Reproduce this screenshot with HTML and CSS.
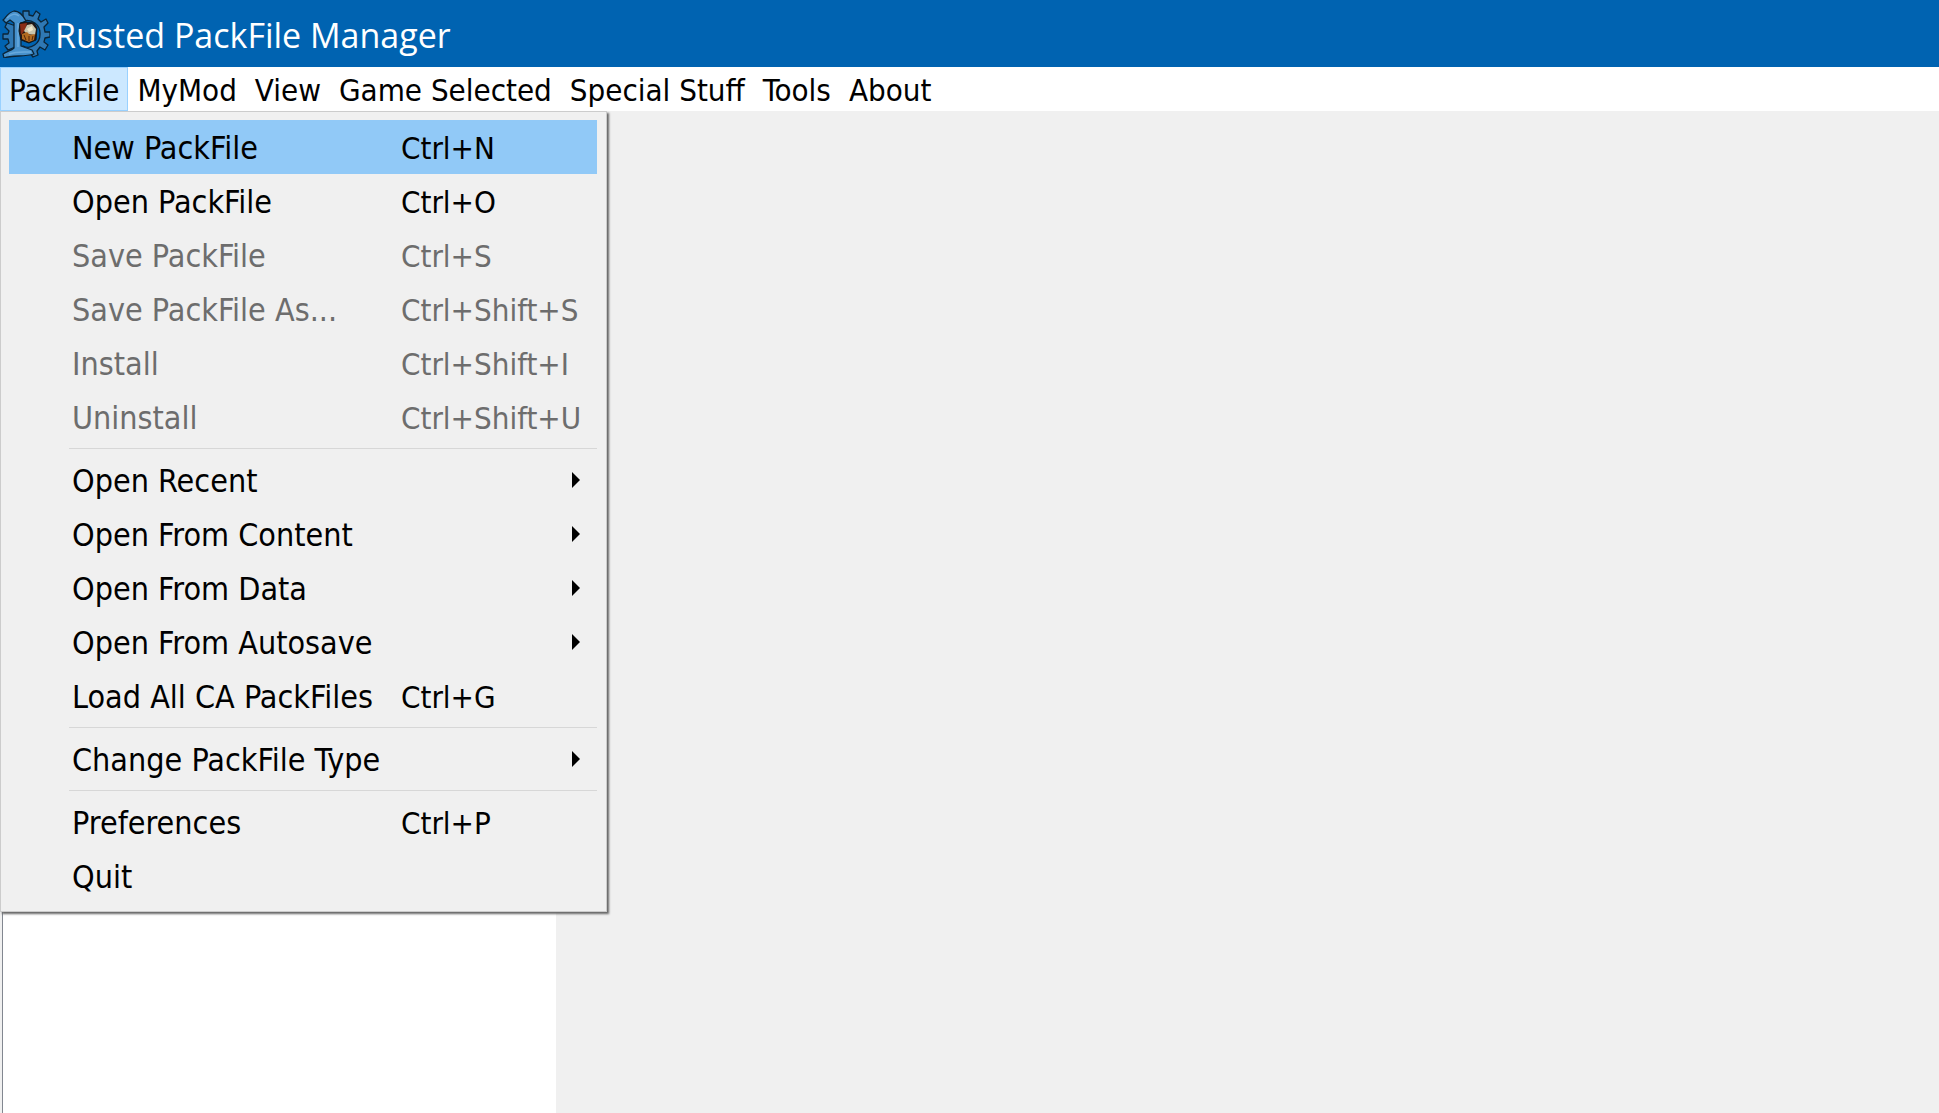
FILE: index.html
```html
<!DOCTYPE html>
<html lang="en">
<head>
<meta charset="utf-8">
<title>Rusted PackFile Manager</title>
<link rel="stylesheet" href="styles.css">
</head>
<body>
<header class="titlebar">
  <svg class="logo" viewBox="0 0 48 48" aria-hidden="true">
    <g stroke="#0b2436" stroke-width="1.3" stroke-linejoin="round">
      <path fill="#2f78b4" d="M21 5V1h6v4l4 1 3-5 4 3-2 5 3 3 5-3 2 4-4 4 1 5h5v5l-5 1-1 4 4 3-3 5-5-3-3 4 1 4-5 2-3-4-7 1V36a12 13 0 0 0 17-12 13 13 0 0 0-17-13z"/>
      <path fill="#2f78b4" d="M11 15l-6-2-2 4 4 4-1 3H1v5h5l1 4-4 3 3 4 7-3V15z"/>
      <path fill="#4791cc" d="M1 10C4 8 5 3 12 1c6 0 10 6 12 10l-5 2v23l11 4 2 4c-10 3-21 1-30 4l-1-4c4-3 8-3 11-6V13L8 10l-4 3z"/>
    </g>
    <path d="M5 8c4-4 9-5 12-2M16 13v24M7 44c8-3 15-2 22-2" fill="none" stroke="#68a9dc" stroke-width="1.5"/>
    <path fill="#281511" stroke="#10191e" d="M18 13l6-1 8 1 3 5-1 12-7 3-8-3-2-9z"/>
    <path fill="#8b2d16" d="M18 14l7-1-2 7-4 5z"/>
    <path fill="#c9c5ad" d="M25 15l5-1 4 5-1 6-8-1-3-3z"/>
    <path fill="#f1e7ca" d="M25 19l5-3 1 4-4 2z"/>
    <path fill="#b06a20" d="M20 24l5-2 3 3 5-1-1 6-5 2-7-3z"/>
    <path d="M22 25l2 5M27 26v5M31 26l-1 4" stroke="#542408" stroke-width="1"/>
  </svg>
  <h1 class="title">Rusted PackFile Manager</h1>
</header>
<nav class="menubar" aria-label="Main menu">
  <div class="menu-root">
    <button class="menu-title open" aria-expanded="true">PackFile</button>
    <div class="menu" role="menu">
      <button class="item active" role="menuitem"><span>New PackFile</span><kbd>Ctrl+N</kbd></button>
      <button class="item" role="menuitem"><span>Open PackFile</span><kbd>Ctrl+O</kbd></button>
      <button class="item" role="menuitem" disabled><span>Save PackFile</span><kbd>Ctrl+S</kbd></button>
      <button class="item" role="menuitem" disabled><span>Save PackFile As...</span><kbd>Ctrl+Shift+S</kbd></button>
      <button class="item" role="menuitem" disabled><span>Install</span><kbd>Ctrl+Shift+I</kbd></button>
      <button class="item" role="menuitem" disabled><span>Uninstall</span><kbd>Ctrl+Shift+U</kbd></button>
      <hr class="separator">
      <button class="item submenu" role="menuitem"><span>Open Recent</span></button>
      <button class="item submenu" role="menuitem"><span>Open From Content</span></button>
      <button class="item submenu" role="menuitem"><span>Open From Data</span></button>
      <button class="item submenu" role="menuitem"><span>Open From Autosave</span></button>
      <button class="item" role="menuitem"><span>Load All CA PackFiles</span><kbd>Ctrl+G</kbd></button>
      <hr class="separator">
      <button class="item submenu" role="menuitem"><span>Change PackFile Type</span></button>
      <hr class="separator">
      <button class="item" role="menuitem"><span>Preferences</span><kbd>Ctrl+P</kbd></button>
      <button class="item" role="menuitem"><span>Quit</span></button>
    </div>
  </div>
  <button class="menu-title">MyMod</button>
  <button class="menu-title">View</button>
  <button class="menu-title">Game Selected</button>
  <button class="menu-title">Special Stuff</button>
  <button class="menu-title">Tools</button>
  <button class="menu-title">About</button>
</nav>
<main class="workspace">
  <aside class="tree" aria-label="PackFile contents"></aside>
</main>
</body>
</html>
```
FILE: styles.css
```css
* { box-sizing: border-box; }

body {
  margin: 0;
  min-height: 100vh;
  display: flex;
  flex-direction: column;
  background: #f0f0f0;
  color: #000;
  font-family: Tahoma, "DejaVu Sans Condensed", "Noto Sans", sans-serif;
  font-size: 31px;
}

button, kbd { font: inherit; color: inherit; }

.titlebar {
  display: flex;
  align-items: center;
  gap: 5px;
  height: 67px;
  padding: 0 2px;
  background: #0063b1;
  color: #fff;
}

.logo { width: 48px; height: 48px; }

.title {
  margin: 0;
  padding-top: 2px;
  font-family: "Open Sans", sans-serif;
  font-size: 34px;
  font-weight: 400;
  line-height: 48px;
}

.menubar {
  display: flex;
  height: 44px;
  background: #fff;
}

.menu-root { position: relative; }

.menu-title {
  height: 44px;
  padding: 2px 8px 0;
  border: 1px solid transparent;
  background: none;
  line-height: 40px;
  white-space: nowrap;
}

.menu-title.open {
  background: #cce8ff;
  border-color: #99d1ff;
}

.menu {
  position: absolute;
  top: 100%;
  left: 0;
  width: 607px;
  padding: 8px 9px 8px 8px;
  background: #f0f0f0;
  border: 1px solid #ccc;
  box-shadow: 2px 2px 2px #666;
}

.item {
  display: grid;
  grid-template-columns: 329px 1fr;
  align-items: center;
  width: 100%;
  height: 54px;
  padding: 0 17px 0 63px;
  border: 0;
  background: none;
  text-align: left;
  line-height: 48px;
  white-space: nowrap;
}

.item span { font-size: 32px; }

.item span,
.item kbd { padding-top: 2px; }

.item.active { background: #91c9f7; }
.item:disabled { color: #6d6d6d; }

.submenu::after {
  content: "";
  justify-self: end;
  border: solid transparent;
  border-width: 8px 0 8px 8px;
  border-left-color: #000;
}

.separator {
  height: 1px;
  margin: 4px 0 4px 60px;
  border: 0;
  background: #d7d7d7;
}

.workspace {
  flex: 1;
  display: flex;
  padding-left: 2px;
}

.tree {
  width: 554px;
  background: #fff;
  border-left: 1px solid #828790;
}
```
